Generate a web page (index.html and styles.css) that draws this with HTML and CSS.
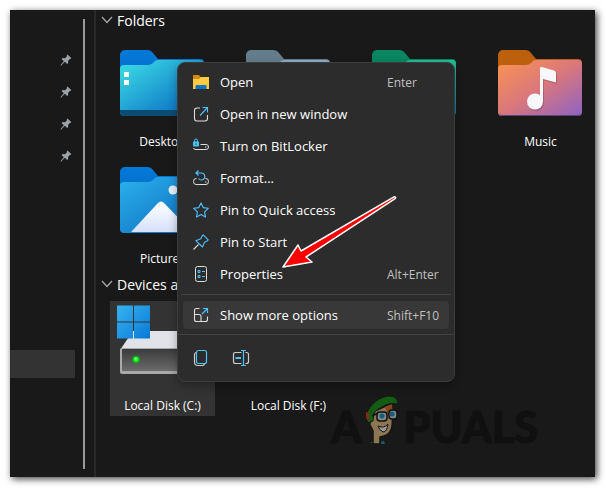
FILE: index.html
```html
<!DOCTYPE html>
<html lang="en">
<head>
  <meta charset="UTF-8">
  <title>This PC</title>
  <link rel="stylesheet" href="styles.css">
</head>
<body>
  <svg class="defs" width="0" height="0" aria-hidden="true">
    <defs>
      <linearGradient id="desktop-front" x1="0" y1="0" x2="1" y2="1"><stop offset="0" stop-color="#3ee0e6"/><stop offset=".75" stop-color="#117ec9"/></linearGradient>
      <linearGradient id="blue-back" x1="0" y1="0" x2="0" y2="1"><stop offset="0" stop-color="#0479d8"/><stop offset="1" stop-color="#0660b8"/></linearGradient>
      <linearGradient id="pictures-front" x1="0" y1="0" x2="1" y2="1"><stop offset="0" stop-color="#2bb2ee"/><stop offset="1" stop-color="#0a66b9"/></linearGradient>
      <linearGradient id="mountain" x1="0" y1="0" x2="0" y2="1"><stop offset="0" stop-color="#ffffff"/><stop offset="1" stop-color="#d5e1fa"/></linearGradient>
      <linearGradient id="music-front" x1="0" y1="0" x2="1" y2="1"><stop offset="0" stop-color="#fb9450"/><stop offset=".5" stop-color="#d9777c"/><stop offset="1" stop-color="#8e62c4"/></linearGradient>
      <linearGradient id="teal-front" x1="0" y1="0" x2="0" y2="1"><stop offset="0" stop-color="#22bd94"/><stop offset="1" stop-color="#0b7aa4"/></linearGradient>
      <linearGradient id="drive-front" x1="0" y1="0" x2="0" y2="1"><stop offset="0" stop-color="#3b3b3b"/><stop offset="1" stop-color="#6b6b6b"/></linearGradient>
      <linearGradient id="win-pane" x1="0" y1="0" x2="1" y2="1"><stop offset="0" stop-color="#35b4f2"/><stop offset="1" stop-color="#0a78d4"/></linearGradient>
      <symbol id="pin" viewBox="0 0 12 12"><path fill="#98a3ab" d="M7.600.6l3.800 3.700-1 .8-.6-.1-1.700 1.900.1 2.100-1.100 1.100-2.300-2.300L1 11.700l-.6-.5 3.400-3.900L1.600 5.100l1-1 2.300.1L6.900 2.400l-.1-.8z"/></symbol>
    </defs>
  </svg>

  <div class="window">
    <aside class="sidebar">
      <nav class="quick-list">
        <a class="quick-item" href="#" aria-label="Pinned folder"><svg width="12" height="12"><use href="#pin"/></svg></a>
        <a class="quick-item" href="#" aria-label="Pinned folder"><svg width="12" height="12"><use href="#pin"/></svg></a>
        <a class="quick-item" href="#" aria-label="Pinned folder"><svg width="12" height="12"><use href="#pin"/></svg></a>
        <a class="quick-item" href="#" aria-label="Pinned folder"><svg width="12" height="12"><use href="#pin"/></svg></a>
        <a class="current-item" href="#" aria-label="This PC"></a>
      </nav>
      <div class="scrollbar"></div>
    </aside>

    <main class="content">
      <section class="group">
        <h2 class="group-title">
          <svg width="12" height="8" viewBox="0 0 12 8"><path d="M1 1l5 5.500L11 1" fill="none" stroke="#a5a5a5" stroke-width="1.3"/></svg>
          Folders
        </h2>
        <div class="tiles">
          <a class="tile" href="#">
            <svg class="tile-icon" viewBox="0 0 84 70">
              <path d="M0 5a5 5 0 0 1 5-5h22q4 0 6 3l5 6h42a4 4 0 0 1 4 4v45H0z" fill="url(#blue-back)"/>
              <path d="M0 19a4 4 0 0 1 4-4h24q3 0 5-2l2-2q1-1 3-1h42a4 4 0 0 1 4 4v48a4 4 0 0 1-4 4H4a4 4 0 0 1-4-4z" fill="url(#desktop-front)"/>
              <path d="M0 60h84v2a4 4 0 0 1-4 4H4a4 4 0 0 1-4-4z" fill="#0b4c72"/>
              <path d="M4 22h5v5H4zM4 30h5v5H4z" fill="#fff"/>
            </svg>
            <span class="tile-label">Desktop</span>
          </a>
          <a class="tile" href="#">
            <svg class="tile-icon" viewBox="0 0 84 70">
              <path d="M0 5a5 5 0 0 1 5-5h22q4 0 6 3l5 6h42a4 4 0 0 1 4 4v45H0z" fill="#647d8c"/>
              <path d="M0 19a4 4 0 0 1 4-4h24q3 0 5-2l2-2q1-1 3-1h42a4 4 0 0 1 4 4v48a4 4 0 0 1-4 4H4a4 4 0 0 1-4-4z" fill="#8fabc8"/>
            </svg>
            <span class="tile-label">Documents</span>
          </a>
          <a class="tile" href="#">
            <svg class="tile-icon" viewBox="0 0 84 70">
              <path d="M0 5a5 5 0 0 1 5-5h22q4 0 6 3l5 6h42a4 4 0 0 1 4 4v45H0z" fill="#0a8562"/>
              <path d="M0 19a4 4 0 0 1 4-4h24q3 0 5-2l2-2q1-1 3-1h42a4 4 0 0 1 4 4v48a4 4 0 0 1-4 4H4a4 4 0 0 1-4-4z" fill="url(#teal-front)"/>
            </svg>
            <span class="tile-label">Downloads</span>
          </a>
          <a class="tile" href="#">
            <svg class="tile-icon" viewBox="0 0 84 70">
              <path d="M0 5a5 5 0 0 1 5-5h22q4 0 6 3l5 6h42a4 4 0 0 1 4 4v45H0z" fill="#bd600e"/>
              <path d="M0 19a4 4 0 0 1 4-4h24q3 0 5-2l2-2q1-1 3-1h42a4 4 0 0 1 4 4v48a4 4 0 0 1-4 4H4a4 4 0 0 1-4-4z" fill="url(#music-front)"/>
              <path d="M1 63q1 3 4 3h74q3 0 4-3-1 2-4 2H5q-3 0-4-2z" fill="#5b4379"/>
              <g fill="#6b3d50" opacity=".35" transform="translate(1 1.500)">
                <path d="M42 18q0-1.500 2-1l12 3.500q2 .5 2 2.500v9.500L45 29v23h-3z"/>
                <circle cx="37" cy="51.500" r="8"/>
              </g>
              <g fill="#f8f8fa">
                <path d="M42 18q0-1.500 2-1l12 3.500q2 .5 2 2.500v9.500L45 29v23h-3z"/>
                <circle cx="37" cy="51.500" r="8"/>
              </g>
            </svg>
            <span class="tile-label">Music</span>
          </a>
          <a class="tile" href="#">
            <svg class="tile-icon" viewBox="0 0 84 70">
              <path d="M0 5a5 5 0 0 1 5-5h22q4 0 6 3l5 6h42a4 4 0 0 1 4 4v45H0z" fill="url(#blue-back)"/>
              <path d="M0 19a4 4 0 0 1 4-4h24q3 0 5-2l2-2q1-1 3-1h42a4 4 0 0 1 4 4v48a4 4 0 0 1-4 4H4a4 4 0 0 1-4-4z" fill="url(#pictures-front)"/>
              <circle cx="53" cy="23" r="4.500" fill="#e8f1fb"/>
              <path d="M11 65l27-29q3-3 6 0l28 29z" fill="url(#mountain)"/>
            </svg>
            <span class="tile-label">Pictures</span>
          </a>
        </div>
      </section>

      <section class="group">
        <h2 class="group-title">
          <svg width="12" height="8" viewBox="0 0 12 8"><path d="M1 1l5 5.500L11 1" fill="none" stroke="#a5a5a5" stroke-width="1.3"/></svg>
          Devices and drives
        </h2>
        <div class="tiles">
          <a class="tile selected" href="#">
            <svg class="tile-icon drive" viewBox="0 0 84 70">
              <path d="M13 26h58l13 19H0z" fill="#e2e3e8"/>
              <rect x="0" y="43" width="84" height="26" rx="2" fill="#a9a9a9"/>
              <rect x="2" y="44" width="80" height="22" rx="1" fill="url(#drive-front)"/>
              <circle cx="16" cy="54.500" r="4" fill="#0da316"/>
              <circle cx="16" cy="54.500" r="2.500" fill="#2dfc38"/>
              <circle cx="15.500" cy="53.500" r="1" fill="#b8ffbc"/>
              <path d="M-3 .5h16v16h-16zM14 .5h16v16H14zM-3 17.500h16v16h-16zM14 17.500h16v16H14z" fill="url(#win-pane)"/>
            </svg>
            <span class="tile-label">Local Disk (C:)</span>
          </a>
          <a class="tile" href="#">
            <svg class="tile-icon drive" viewBox="0 0 84 70">
              <path d="M13 26h58l13 19H0z" fill="#e2e3e8"/>
              <rect x="0" y="43" width="84" height="26" rx="2" fill="#a9a9a9"/>
              <rect x="2" y="44" width="80" height="22" rx="1" fill="url(#drive-front)"/>
            </svg>
            <span class="tile-label">Local Disk (F:)</span>
          </a>
        </div>
      </section>
    </main>

    <div class="watermark">
      <span>A</span>
      <svg width="36" height="50" viewBox="0 0 36 50">
        <path d="M6 47l3 2h3l1-2zM16 47l2 2h3l-1-3z" fill="#135f6f"/>
        <path d="M6 26l5-10 15-7 3 8-1 14q-1 8-8 10l-4 1v7H9V36l-3-6z" fill="#8c7550" stroke="#141414" stroke-width="1.500"/>
        <path d="M21 12l7-3 1 14-5-3z" fill="#87451f"/>
        <path d="M2 20C6 9 15 2 25 1q9 0 9 8-9-2-16 3-5 2-8 6l-1 8-5 2-2-5z" fill="#145c14" stroke="#121b10" stroke-width="1"/>
        <path d="M2 17l3 1v8l-3-3z" fill="#8a251c"/>
        <path d="M8 21l6-3" stroke="#111" stroke-width="1.500"/>
        <rect x="13" y="17" width="10" height="9" rx="3" fill="#80868a" stroke="#101010" stroke-width="1.500"/>
        <rect x="25" y="15" width="8" height="9" rx="3" fill="#80868a" stroke="#101010" stroke-width="1.500"/>
        <circle cx="18" cy="21" r="2.500" fill="#165f78"/>
        <circle cx="28" cy="19" r="2.500" fill="#165f78"/>
        <path d="M14 31q6 3 10-2-1 8-5 8-4-2-5-6z" fill="#999" stroke="#151515"/>
      </svg>
      <span>PUALS</span>
    </div>

    <div class="menu" role="menu">
      <button class="menu-item" role="menuitem">
        <svg width="16" height="16" viewBox="0 0 16 16"><path d="M0 1h6l1.500 2H16v5H0z" fill="#d58a05"/><path d="M0 5h6l2-2h8v12H0z" fill="#fdcb3f"/><path d="M2.500 15v-3q0-1 1-1h9q1 0 1 1v3z" fill="#0a72c8"/></svg>
        <span class="menu-text">Open</span><span class="shortcut">Enter</span>
      </button>
      <button class="menu-item" role="menuitem">
        <svg width="16" height="16" viewBox="0 0 16 16" fill="none"><path d="M7 2H4Q1.500 2 1.500 4.500v8Q1.500 15 4 15h8q2.500 0 2.500-2.500V9" stroke="#ddd" stroke-width="1.100"/><path d="M7 9.500L14.500 1.500M9.500 1.500h5v5" stroke="#4cc2ff" stroke-width="1.100"/></svg>
        <span class="menu-text">Open in new window</span>
      </button>
      <button class="menu-item" role="menuitem">
        <svg width="16" height="16" viewBox="0 0 16 16" fill="none"><path d="M7.500 6.500H13q2.500 0 2.500 2.500t-2.500 2.500H3Q.5 11.500.5 10" stroke="#ddd"/><path d="M12 9h1.500" stroke="#ddd"/><path d="M1.500 4V2.500a1.500 1.500 0 0 1 3 0V4" stroke="#4cc2ff"/><rect y="3.500" width="6" height="5" rx=".7" fill="#4cc2ff"/><path d="M3 5v2" stroke="#1c5877"/></svg>
        <span class="menu-text">Turn on BitLocker</span>
      </button>
      <button class="menu-item" role="menuitem">
        <svg width="16" height="16" viewBox="0 0 16 16" fill="none"><path d="M3.500 8.500H3q-2.500 0-2.500 3T3 14.500h10q2.500 0 2.500-3t-2.500-3h-.5" stroke="#ddd"/><path d="M12 12h1.500" stroke="#ddd"/><path d="M5.500.5L3 3l2.500 2.500M3 3h5.500a3.500 3.500 0 1 1-3 5.500" stroke="#4cc2ff" stroke-width="1.200"/></svg>
        <span class="menu-text">Format...</span>
      </button>
      <button class="menu-item" role="menuitem">
        <svg width="16" height="16" viewBox="0 0 16 16" fill="none"><path d="M8 .9l2.200 4.700 5.100.7-3.700 3.600.9 5.200L8 12.600l-4.500 2.500.9-5.200L.7 6.300l5.100-.7z" stroke="#4cc2ff" stroke-width="1.100" stroke-linejoin="round"/></svg>
        <span class="menu-text">Pin to Quick access</span>
      </button>
      <button class="menu-item" role="menuitem">
        <svg width="16" height="16" viewBox="0 0 16 16" fill="none"><path d="M.5 15.500l5-5" stroke="#ddd" stroke-width="1.100"/><path d="M10.200.8l5 5-1 1.200-2.700 1.200-2 4.800L2.800 6.700l5-2 1.400-2.900z" stroke="#4cc2ff" stroke-width="1.100" stroke-linejoin="round"/></svg>
        <span class="menu-text">Pin to Start</span>
      </button>
      <button class="menu-item" role="menuitem">
        <svg width="16" height="16" viewBox="0 0 16 16" fill="none"><rect x="2.500" y=".5" width="11" height="15" rx="2" stroke="#ddd"/><path d="M5 4.500h2v2H5zM5 9.500h2v2H5zM9 5.500h3M9 10.500h3" stroke="#4cc2ff"/></svg>
        <span class="menu-text">Properties</span><span class="shortcut">Alt+Enter</span>
      </button>
      <hr class="menu-line">
      <button class="menu-item hovered" role="menuitem">
        <svg width="16" height="16" viewBox="0 0 16 16" fill="none"><path d="M6.500 1.500h-3q-2 0-2 2v9q0 2 2 2h9q2 0 2-2v-3M1.500 7.500H6q2 0 2 2v5" stroke="#ddd" stroke-width="1.100"/><path d="M9 7l5.500-5.500M10 1.500h4.500V6" stroke="#4cc2ff" stroke-width="1.200"/></svg>
        <span class="menu-text">Show more options</span><span class="shortcut">Shift+F10</span>
      </button>
      <hr class="menu-line full">
      <div class="menu-actions">
        <button class="action" aria-label="Copy">
          <svg width="16" height="18" viewBox="0 0 16 18" fill="none"><path d="M3 3.500q-1.500.5-1.500 2V13q0 3.500 3.500 3.500h4.500q1.500 0 2-1.500" stroke="#ccc" stroke-width="1.200"/><rect x="3.500" y="1.500" width="10" height="13" rx="2" stroke="#4cc2ff" stroke-width="1.200"/></svg>
        </button>
        <button class="action" aria-label="Rename">
          <svg width="18" height="18" viewBox="0 0 18 18" fill="none"><path d="M9.500 3.500h-6Q1.500 3.500 1.500 5.500v7q0 2 2 2h6M13.500 3.500h1q2 0 2 2v7q0 2-2 2h-1" stroke="#ccc" stroke-width="1.200"/><path d="M3.500 9H9" stroke="#4cc2ff" stroke-width="2"/><path d="M11.500 1.500v15M9 1.500h5M9 16.500h5" stroke="#4cc2ff" stroke-width="1.200"/></svg>
        </button>
      </div>
    </div>

    <svg class="arrow" width="118" height="76" viewBox="0 0 118 76">
      <path d="M2 72L17 50l3 6L113 1.800q2-.5 1.500 1.500L25 62l6 5z" fill="#f00" stroke="#fff" stroke-width="1.500" stroke-linejoin="round"/>
    </svg>
  </div>
</body>
</html>
```
FILE: styles.css
```css
* {
  box-sizing: border-box;
}
body {
  margin: 0;
  padding: 10px 11px 11px 10px;
  background: #fff;
  color: #fff;
  font-family: "Open Sans", "Noto Sans", sans-serif;
}
a {
  color: inherit;
  text-decoration: none;
}
svg {
  flex-shrink: 0;
}
.defs {
  position: absolute;
}
.window {
  position: relative;
  display: flex;
  min-height: calc(100vh - 21px);
  background: #191919;
  box-shadow: 2px 2px 7px rgba(0, 0, 0, 0.75);
}

/* sidebar */
.sidebar {
  display: flex;
  gap: 8px;
  width: 86px;
  border-right: 2px solid #292929;
}
.quick-list {
  width: 65px;
  padding-top: 34px;
}
.quick-item {
  display: flex;
  align-items: center;
  justify-content: flex-end;
  height: 32px;
  padding-right: 3px;
}
.current-item {
  display: block;
  height: 28px;
  margin-top: 178px;
  background: #333;
}
.scrollbar {
  width: 2px;
  margin: 9px 0 8px;
  background: #9a9a9a;
}

/* folders and drives */
.content {
  flex: 1;
  padding-left: 14px;
}
.group + .group {
  margin-top: 5px;
}
.group-title {
  display: flex;
  align-items: center;
  gap: 4px;
  height: 20px;
  margin: 0 0 7px -9px;
  font-size: 14px;
  font-weight: 400;
}
.tiles {
  display: grid;
  grid-template-columns: repeat(auto-fill, 105px);
  gap: 2px 21px;
}
.tile {
  display: flex;
  flex-direction: column;
  align-items: center;
  height: 115px;
  padding-top: 13px;
}
.tile.selected {
  background: #333;
}
.tile-icon {
  align-self: flex-start;
  width: 84px;
  height: 70px;
  margin: 0 0 13px 10px;
  overflow: visible;
}
.tile-icon.drive {
  margin-top: -9px;
  margin-bottom: 22px;
}
.tile-label {
  font-size: 12px;
  line-height: 18px;
}

/* context menu */
.menu {
  position: absolute;
  top: 52px;
  left: 167px;
  width: 278px;
  padding-top: 3px;
  background: #2c2c2c;
  border: 1px solid #3c3c3c;
  border-radius: 8px;
  box-shadow: 0 4px 10px rgba(0, 0, 0, 0.3);
}
.menu-item {
  display: flex;
  align-items: center;
  gap: 11px;
  width: calc(100% - 10px);
  height: 28px;
  margin: 2px 5px 4px;
  padding: 0 0 0 10px;
  background: none;
  border: 0;
  border-radius: 4px;
  color: #fff;
  font: 13px "Open Sans", "Noto Sans", sans-serif;
  text-align: left;
}
.menu-item.hovered {
  background: #383838;
}
.menu-text {
  flex: 1;
}
.shortcut {
  width: 62px;
  color: #c0c0c0;
  font-size: 12px;
}
.menu-line {
  height: 1px;
  margin: 6px 3px;
  background: #424242;
  border: 0;
}
.menu-line.full {
  margin: 5px 0 0;
}
.menu-actions {
  display: flex;
  align-items: center;
  gap: 14px;
  height: 46px;
  padding-left: 10px;
}
.action {
  display: flex;
  align-items: center;
  justify-content: center;
  width: 26px;
  height: 26px;
  padding: 0;
  background: none;
  border: 0;
}

/* overlays */
.arrow {
  position: absolute;
  top: 195px;
  left: 281px;
  margin: -10px 0 0 -10px;
}
.watermark {
  position: absolute;
  right: 57px;
  bottom: 28px;
  display: flex;
  align-items: flex-end;
  gap: 3px;
  color: #101010;
  font: 900 43px/44px Lato, sans-serif;
  -webkit-text-stroke: 1px #101010;
}
.watermark svg {
  margin-bottom: 4px;
}
```
